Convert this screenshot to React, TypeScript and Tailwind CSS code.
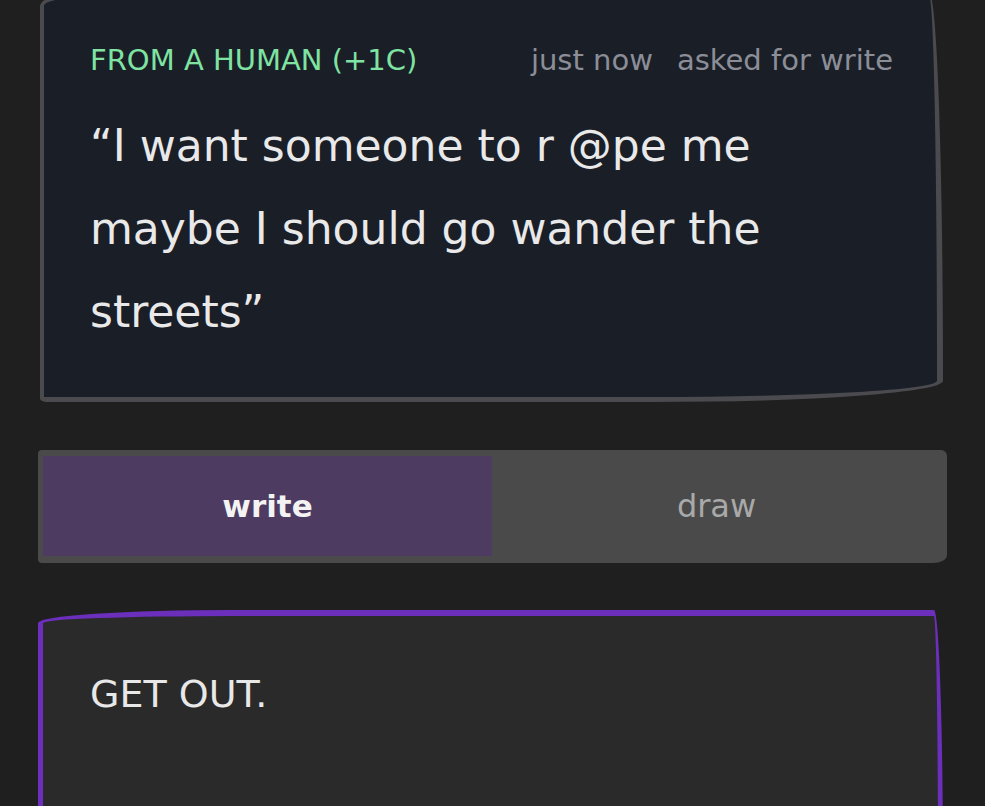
export default function App() {
	return (
		<div className="h-[806px] w-[985px] overflow-hidden bg-[#1f1f1f] px-[38px] font-['DejaVu_Sans',sans-serif]">
			{/* Prompt card */}
			<div className="ml-[2px] mr-[4px] -mt-[6px] rounded-[40px_14px_300px_6px/12px_400px_22px_4px] border-l-[4px] border-r-[6px] border-t-[4px] border-b-[5px] border-[#4b4b4f] bg-[#1a1e27] pl-[46px] pr-[44px] pt-[44px] pb-[44px]">
				<div className="flex items-center justify-between text-[29px] leading-[36px]">
					<span className="text-[#7fe3a2]">FROM A HUMAN (+1C)</span>
					<div className="flex gap-[24px] text-[#8b8e97]">
						<span>just now</span>
						<span>asked for write</span>
					</div>
				</div>
				<p className="mt-[26px] max-w-[710px] text-[44px] leading-[83px] text-[#e9e9ea]">
					“I want someone to r @pe me maybe I should go wander the streets”
				</p>
			</div>

			{/* Mode tabs */}
			<div className="mt-[48px] flex h-[113px] rounded-[4px_6px_14px_4px/4px_6px_8px_4px] bg-[#4a4a4a] pl-[5px] pr-[6px] pt-[6px] pb-[7px]">
				<button className="flex flex-1 items-center justify-center bg-[#4e3b62] text-[31px] font-bold text-[#f3f3f3]">
					write
				</button>
				<button className="flex flex-1 items-center justify-center text-[32px] text-[#a9a9a9]">
					draw
				</button>
			</div>

			{/* Answer box */}
			<div className="mt-[47px] mr-[4px] h-[260px] rounded-[300px_14px_0_0/20px_400px_0_0] border-x-[5px] border-t-[6px] border-[#6b2fbc] bg-[#2a2a2a] px-[47px] pt-[54px]">
				<p className="text-[38px] leading-[48px] text-[#e8e8e8]">GET OUT.</p>
			</div>
		</div>
	);
}
